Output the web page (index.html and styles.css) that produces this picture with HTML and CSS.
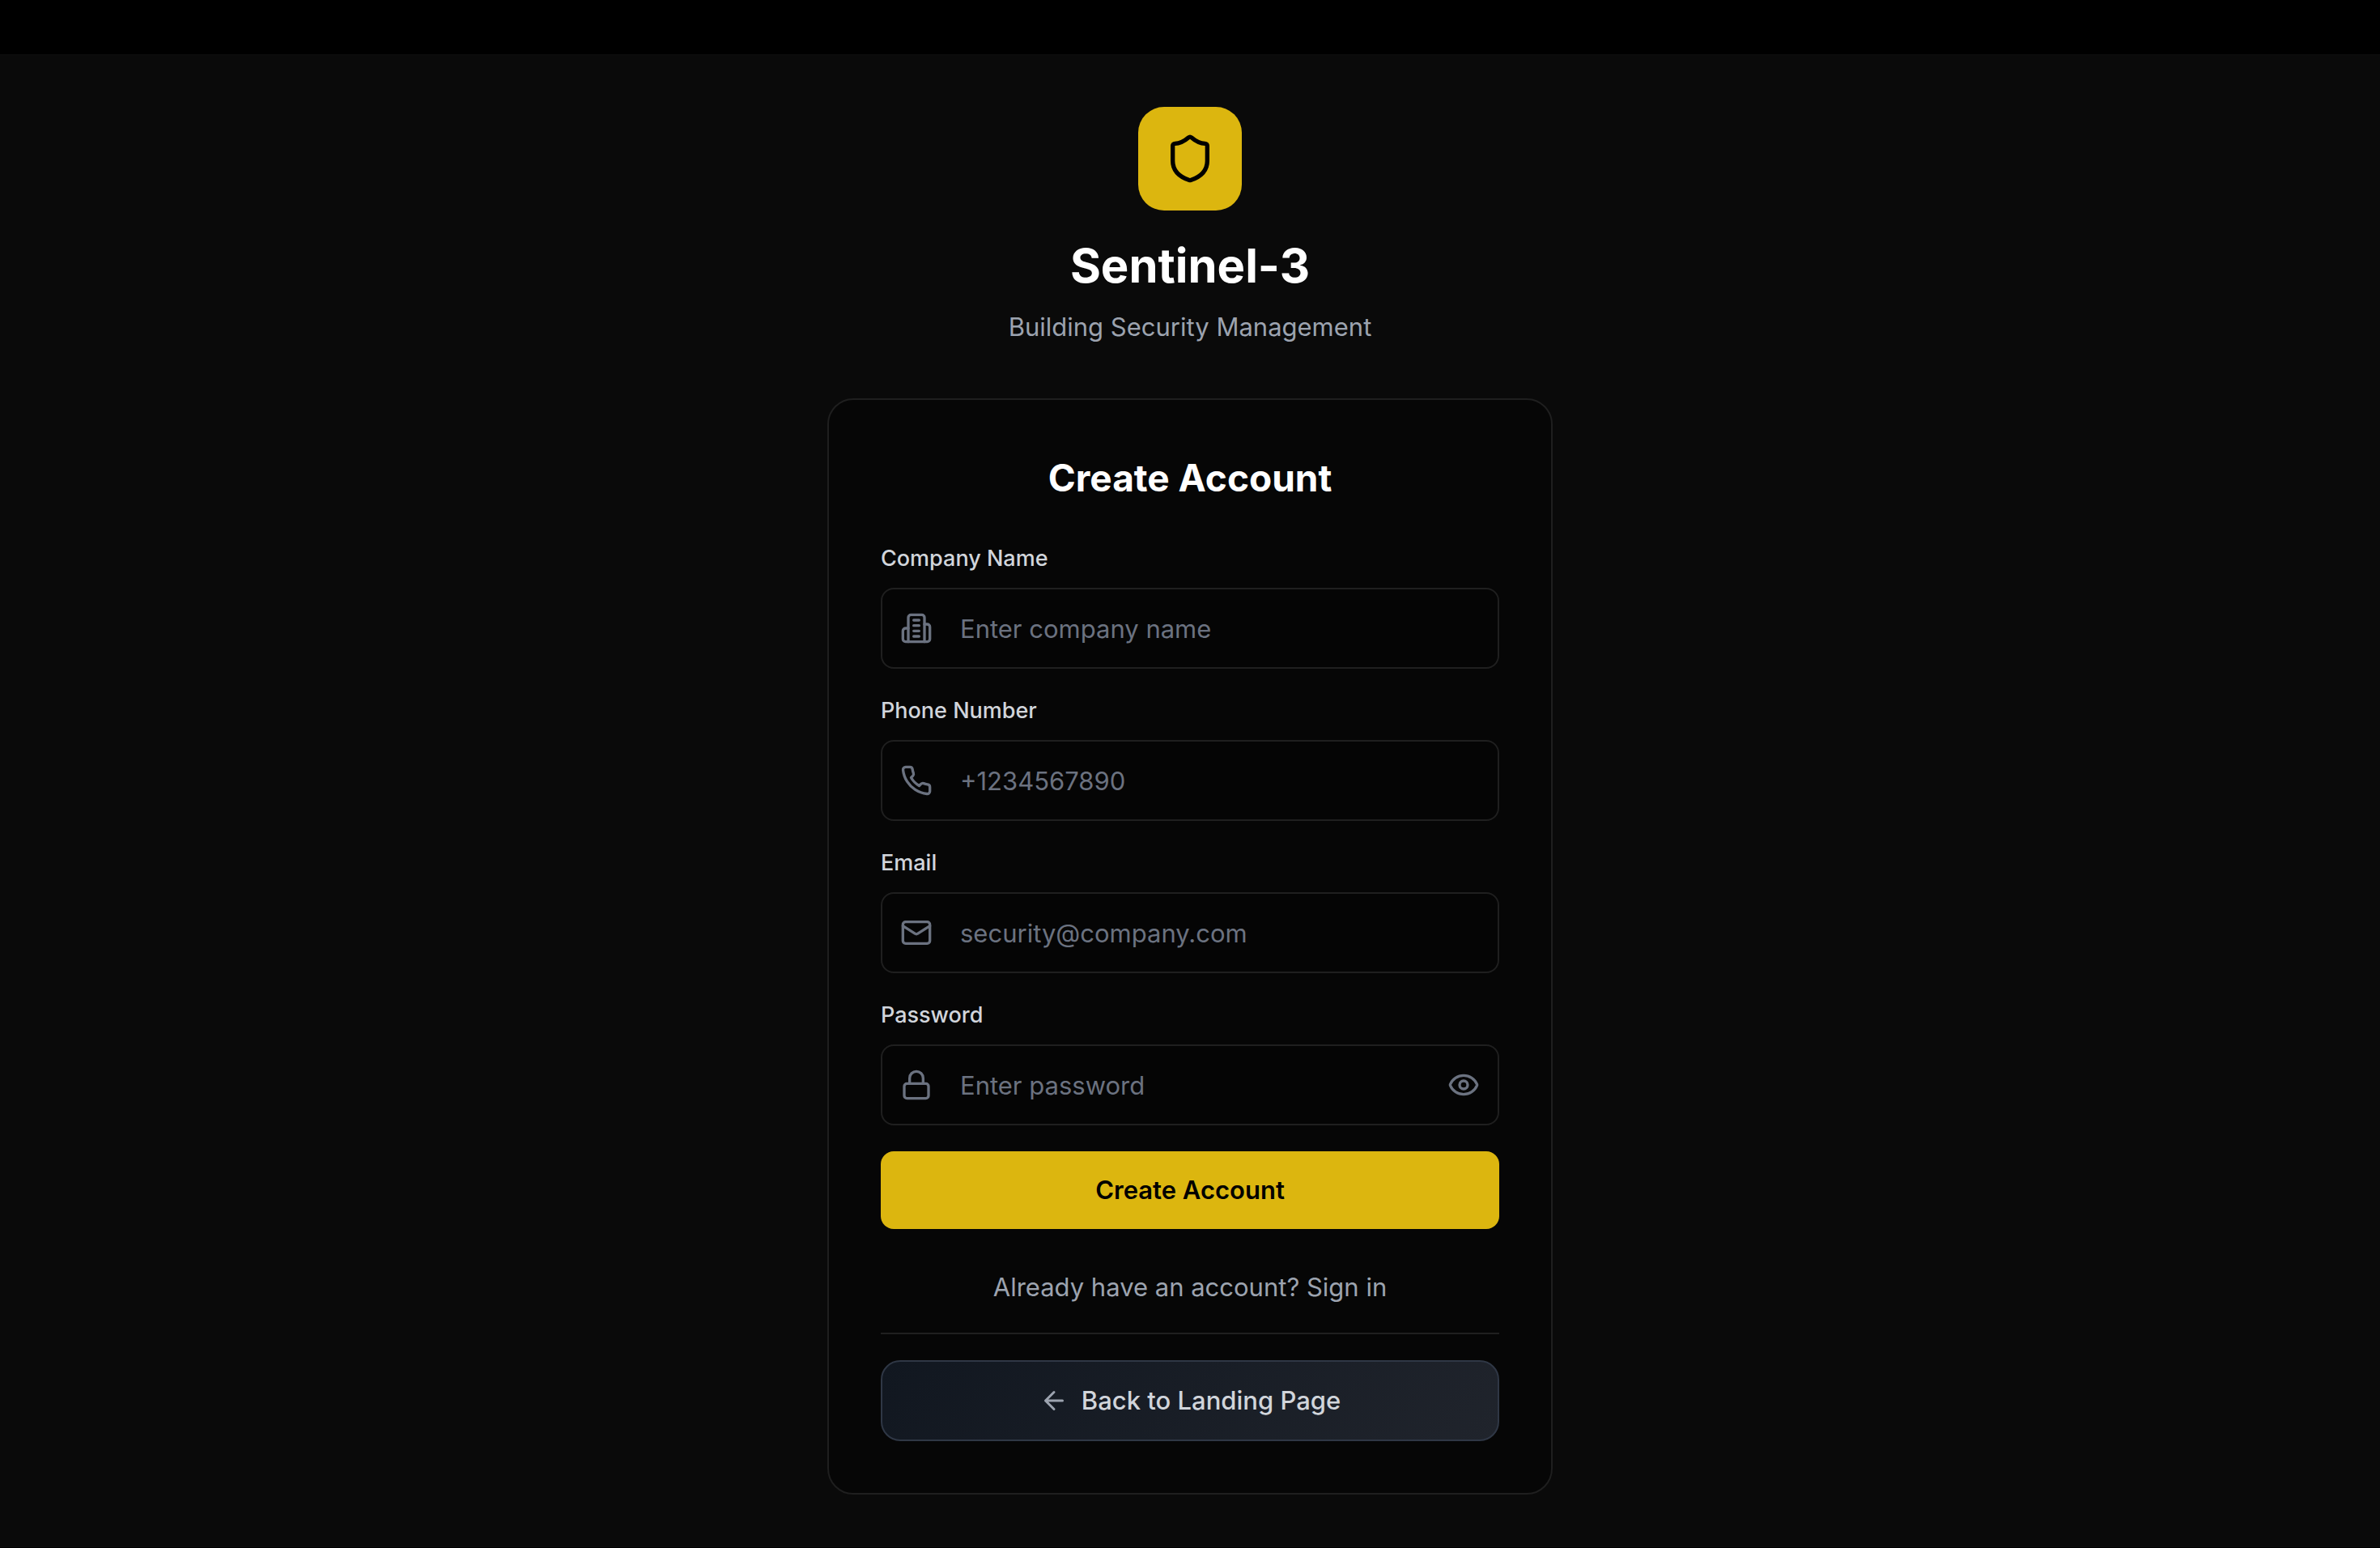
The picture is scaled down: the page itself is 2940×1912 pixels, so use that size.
FILE: index.html
```html
<!DOCTYPE html>
<html lang="en">
<head>
<meta charset="utf-8">
<meta name="viewport" content="width=device-width, initial-scale=1">
<title>Sentinel-3 – Create Account</title>
<link rel="stylesheet" href="styles.css">
</head>
<body>
<div class="topbar"></div>
<main class="page">
  <header class="brand">
    <div class="brand-logo">
      <svg class="icon icon-lg" viewBox="0 0 24 24" aria-hidden="true"><path d="M20 13c0 5-3.500 7.500-7.660 8.950a1 1 0 0 1-.67-.01C7.500 20.500 4 18 4 13V6a1 1 0 0 1 1-1c2 0 4.500-1.200 6.240-2.720a1.170 1.170 0 0 1 1.520 0C14.510 3.810 17 5 19 5a1 1 0 0 1 1 1z"/></svg>
    </div>
    <h1 class="brand-name">Sentinel-3</h1>
    <p class="brand-tagline">Building Security Management</p>
  </header>

  <section class="card">
    <h2 class="card-title">Create Account</h2>
    <form class="form">
      <div class="field">
        <label class="label" for="company">Company Name</label>
        <div class="control">
          <svg class="icon" viewBox="0 0 24 24" aria-hidden="true"><path d="M6 22V4a2 2 0 0 1 2-2h8a2 2 0 0 1 2 2v18Z"/><path d="M6 12H4a2 2 0 0 0-2 2v6a2 2 0 0 0 2 2h2"/><path d="M18 9h2a2 2 0 0 1 2 2v9a2 2 0 0 1-2 2h-2"/><path d="M10 6h4M10 10h4M10 14h4M10 18h4"/></svg>
          <input class="input" id="company" type="text" placeholder="Enter company name">
        </div>
      </div>
      <div class="field">
        <label class="label" for="phone">Phone Number</label>
        <div class="control">
          <svg class="icon" viewBox="0 0 24 24" aria-hidden="true"><path d="M22 16.920v3a2 2 0 0 1-2.180 2 19.790 19.790 0 0 1-8.630-3.070 19.500 19.500 0 0 1-6-6 19.790 19.790 0 0 1-3.070-8.670A2 2 0 0 1 4.110 2h3a2 2 0 0 1 2 1.720 12.840 12.840 0 0 0 .7 2.810 2 2 0 0 1-.45 2.110L8.090 9.910a16 16 0 0 0 6 6l1.270-1.270a2 2 0 0 1 2.110-.45 12.840 12.840 0 0 0 2.810.7A2 2 0 0 1 22 16.920z"/></svg>
          <input class="input" id="phone" type="tel" placeholder="+1234567890">
        </div>
      </div>
      <div class="field">
        <label class="label" for="email">Email</label>
        <div class="control">
          <svg class="icon" viewBox="0 0 24 24" aria-hidden="true"><rect width="20" height="16" x="2" y="4" rx="2"/><path d="m22 7-8.970 5.700a1.940 1.940 0 0 1-2.060 0L2 7"/></svg>
          <input class="input" id="email" type="email" placeholder="security@company.com">
        </div>
      </div>
      <div class="field">
        <label class="label" for="password">Password</label>
        <div class="control">
          <svg class="icon" viewBox="0 0 24 24" aria-hidden="true"><rect width="18" height="11" x="3" y="11" rx="2"/><path d="M7 11V7a5 5 0 0 1 10 0v4"/></svg>
          <input class="input" id="password" type="password" placeholder="Enter password">
          <button class="reveal" type="button" aria-label="Show password">
            <svg class="icon" viewBox="0 0 24 24" aria-hidden="true"><path d="M2.062 12.348a1 1 0 0 1 0-.696 10.750 10.750 0 0 1 19.876 0 1 1 0 0 1 0 .696 10.750 10.750 0 0 1-19.876 0"/><circle cx="12" cy="12" r="3"/></svg>
          </button>
        </div>
      </div>
      <button class="submit" type="submit">Create Account</button>
    </form>
    <p class="switch"><a class="switch-link" href="#">Already have an account? Sign in</a></p>
    <div class="footer">
      <a class="back" href="#">
        <svg class="icon icon-sm" viewBox="0 0 24 24" aria-hidden="true"><path d="m12 19-7-7 7-7M19 12H5"/></svg>
        <span>Back to Landing Page</span>
      </a>
    </div>
  </section>
</main>
</body>
</html>
```
FILE: styles.css
```css
*, *::before, *::after { box-sizing: border-box; }

body {
  margin: 0;
  background: #000000;
  color: #ffffff;
  font-family: Inter, "Liberation Sans", sans-serif;
  font-size: 31px;
  line-height: 48px;
}

h1, h2, p { margin: 0; }

a { color: inherit; text-decoration: none; }

button, input { font: inherit; }

.topbar { height: 67px; }

.page {
  display: flex;
  flex-direction: column;
  align-items: center;
  gap: 64px;
  padding: 64px 32px;
  border-top: 1px solid #0d0d0d;
  border-bottom: 1px solid #0d0d0d;
  background: #0a0a0a;
}

.brand { display: flex; flex-direction: column; align-items: center; text-align: center; }

.brand-logo {
  display: grid;
  place-items: center;
  width: 128px;
  height: 128px;
  margin-bottom: 32px;
  border-radius: 32px;
  background: #dcb60f;
  color: #000000;
}

.brand-name { margin-bottom: 16px; font-size: 58px; font-weight: 700; line-height: 72px; }

.brand-tagline { color: #9ca3af; }

.icon {
  display: block;
  flex: none;
  width: 40px;
  height: 40px;
  fill: none;
  stroke: currentColor;
  stroke-width: 2;
  stroke-linecap: round;
  stroke-linejoin: round;
}

.icon-lg { width: 64px; height: 64px; }
.icon-sm { width: 36px; height: 36px; color: #9ca3af; }

.card {
  width: 100%;
  max-width: 896px;
  padding: 64px;
  border: 2px solid #1f1f1f;
  border-radius: 32px;
  background: #060606;
}

.card-title { margin-bottom: 48px; font-size: 46px; font-weight: 700; line-height: 64px; text-align: center; }

.form { display: flex; flex-direction: column; gap: 32px; }

.label {
  display: block;
  margin-bottom: 16px;
  color: #d1d5db;
  font-size: 27px;
  font-weight: 500;
  line-height: 40px;
}

.control {
  display: flex;
  align-items: center;
  gap: 34px;
  height: 100px;
  padding: 0 22px;
  border: 2px solid #1f1f1f;
  border-radius: 16px;
  background: #050505;
  color: #6b7280;
}

.input {
  flex: 1;
  min-width: 0;
  height: 100%;
  padding: 0;
  border: 0;
  outline: 0;
  background: transparent;
  color: #ffffff;
}

.input::placeholder { color: #6b7280; opacity: 1; }

.reveal { padding: 0; border: 0; background: transparent; color: inherit; cursor: pointer; }

.submit {
  height: 96px;
  padding: 0;
  border: 0;
  border-radius: 16px;
  background: #dcb60f;
  color: #000000;
  font-weight: 600;
  cursor: pointer;
}

.switch { margin: 48px 0 32px; color: #9ca3af; text-align: center; }

.footer { padding-top: 32px; border-top: 2px solid #1f1f1f; }

.back {
  display: flex;
  align-items: center;
  justify-content: center;
  gap: 16px;
  height: 100px;
  border: 2px solid #2f3745;
  border-radius: 24px;
  background: linear-gradient(135deg, #111720, #20242c);
  color: #d1d5db;
  font-weight: 500;
}
```
